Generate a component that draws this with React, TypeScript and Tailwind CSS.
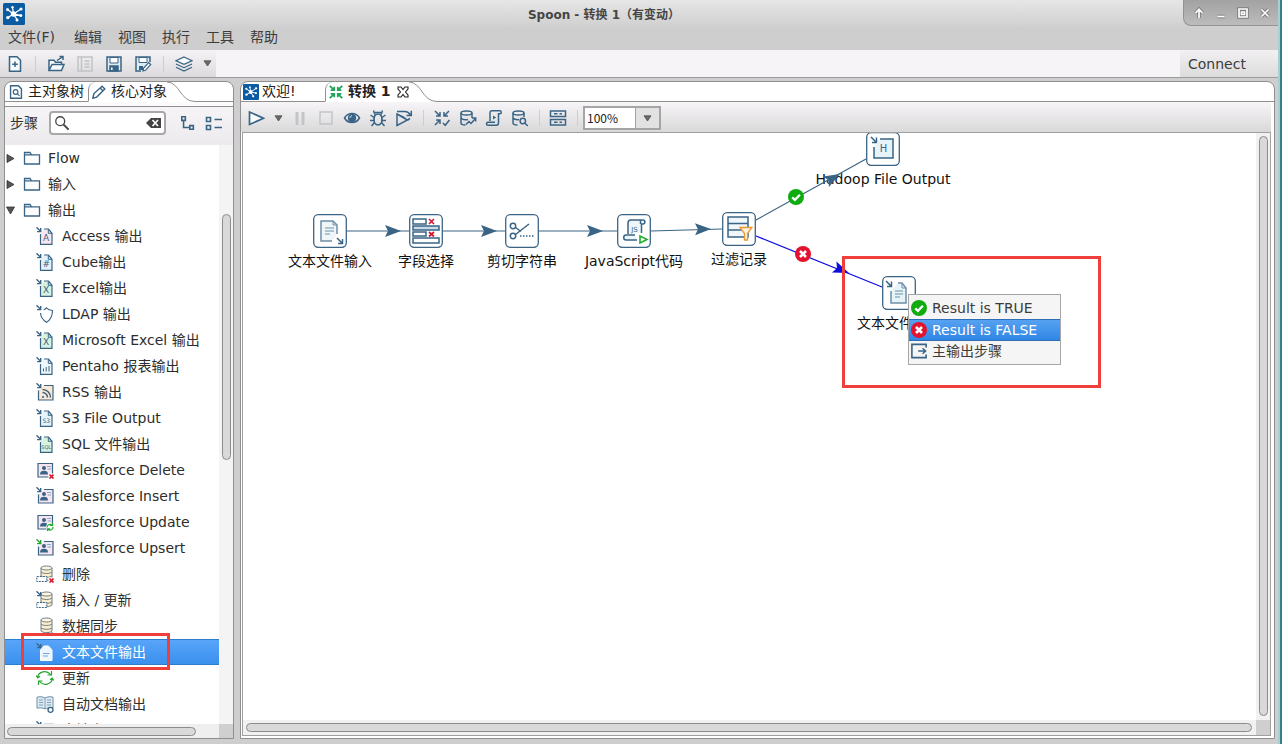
import { useState, type ReactNode } from 'react';
import { clsx } from 'clsx';

const INK = '#3a6485';

interface SvgProps {
  size?: number;
  children: ReactNode;
}

function Svg({ size = 18, children }: SvgProps) {
  return (
    <svg
      width={size}
      height={size}
      viewBox="0 0 18 18"
      fill="none"
      stroke={INK}
      strokeWidth="1.5"
      className="shrink-0"
      aria-hidden="true"
    >
      {children}
    </svg>
  );
}

function Logo({ size }: { size: number }) {
  return (
    <svg width={size} height={size} viewBox="0 0 22 22" className="shrink-0" aria-hidden="true">
      <rect width="22" height="22" rx="1.5" fill="#0a5ba2" />
      <g stroke="#fff" strokeWidth="1.3">
        <path d="M10.5 11 4.5 6.5M10.5 11 9.5 4.5M10.5 11l7.5-5M10.5 11l7 1.5M10.5 11l3.500 5.500M10.500 11 5 14.500" />
      </g>
      <g fill="#fff">
        <circle cx="10.5" cy="11" r="2.7" />
        <circle cx="4.500" cy="6.500" r="1.500" />
        <circle cx="9.500" cy="4.300" r="1.200" />
        <circle cx="18" cy="6" r="1.600" />
        <circle cx="17.800" cy="12.500" r="1.500" />
        <circle cx="14" cy="17" r="1.500" />
        <circle cx="4.800" cy="14.600" r="1.700" />
      </g>
    </svg>
  );
}

function Caret() {
  return (
    <svg width="9" height="7" viewBox="0 0 9 7" aria-hidden="true">
      <path d="M1 .8h7L4.500 6z" fill="#6a6a6a" stroke="#505050" strokeWidth=".8" />
    </svg>
  );
}

/* toolbar icons */

const NewIcon = () => (
  <Svg>
    <path d="M3.500 1.800h7.500l3.500 3.500v11H3.500z" fill="#f6fafc" />
    <path d="M9 6.500v5.500M6.200 9.200h5.600" />
  </Svg>
);

const OpenIcon = () => (
  <Svg>
    <path d="M2 15.500V5.300h5l1.500 2h6v2M2 15.500l3-6h12l-2.500 6z" fill="#f6fafc" />
    <path d="M10 5.500 16 1.500M12.500 1.500H16V5" />
  </Svg>
);

const ExploreIcon = () => (
  <Svg>
    <g stroke="#c2c2c6">
      <path d="M2 2h14v14H2zM5.500 2v14M8.500 6h5M8.500 9h5M8.500 12h5" />
    </g>
  </Svg>
);

const SaveIcon = () => (
  <Svg>
    <path d="M2 2h14v14H2z" fill="#dfeaf1" />
    <path d="M5 2.500h8V8H5z" fill="#fff" strokeWidth="1" />
    <path d="M5 11h8v5H5z" fill={INK} />
    <path d="M6.800 12.500v2.500" stroke="#fff" />
  </Svg>
);

const SaveAsIcon = () => (
  <Svg>
    <path d="M16 7V2H2v14h5" fill="#dfeaf1" />
    <path d="M5 2.500h8V7.500H5z" fill="#fff" strokeWidth="1" />
    <path d="M5 11h4v4H5z" fill={INK} stroke="none" />
    <path d="m9 16 .7-3 5-5.500 2 2-5.200 5.800z" fill="#fff" strokeWidth="1.200" />
  </Svg>
);

const LayersIcon = () => (
  <Svg>
    <path d="m9 2 8 3.700-8 3.700-8-3.700z" fill="#f6fafc" strokeWidth="1.200" />
    <path d="m1 9 8 3.700L17 9M1 12.200 9 16l8-3.800" strokeWidth="1.200" />
  </Svg>
);

const PlayIcon = () => (
  <Svg>
    <path d="M2.500 3v12.500l14-6.250z" fill="#f6fafc" strokeWidth="1.700" />
  </Svg>
);

const PauseIcon = () => (
  <Svg>
    <path d="M6 3v13M12 3v13" stroke="#c4c4c8" strokeWidth="3" />
  </Svg>
);

const StopIcon = () => (
  <Svg>
    <path d="M3 3h12v12H3z" stroke="#c4c4c8" />
  </Svg>
);

const EyeIcon = () => (
  <Svg>
    <path d="M1.500 9C5 3 13 3 16.500 9 13 15 5 15 1.500 9z" />
    <circle cx="9" cy="9" r="4.200" fill={INK} stroke="none" />
    <path d="M6.800 9A2.500 2.500 0 0 1 9 6.700" stroke="#cfe0ec" strokeWidth="1" />
  </Svg>
);

const BugIcon = () => (
  <Svg>
    <path d="M9 5c-3 0-4 2.500-4 5.500S6.500 16 9 16s4-2.500 4-5.500S12 5 9 5z" strokeWidth="1.700" />
    <path d="M5.800 5.500 4.500 1.500M12.200 5.500l1.300-4M6 3.500h6M5 8.500 1.500 6M5 11.500H1M5.500 13.500 2.500 17M13 8.500 16.500 6M13 11.500h4M12.500 13.500l3 3.500" />
  </Svg>
);

const ReplayIcon = () => (
  <Svg>
    <path d="M2 5v11.500L12.500 11zM2 5l8 4" />
    <path d="M2 2.500h8c2.500 0 4 1 5.500 3.500M11.500 6.500h4.800V1.800M12.500 11 15 9.500" />
  </Svg>
);

const arrowsIn = 'M2 2l5 5M3 7h4V3M16 2l-5 5M15 7h-4V3M2 16l5-5M3 11h4v4';

const VerifyIcon = () => (
  <Svg>
    <path d={arrowsIn} />
    <path d="m10 14 2.200 2.300L16.500 11" />
  </Svg>
);

const ImpactIcon = () => (
  <Svg>
    <ellipse cx="7.500" cy="4" rx="5.500" ry="2" />
    <path d="M2 4v10c0 1.200 2 2 4.500 2M13 4v5M2 9c1.500 1.800 5 2 7 1.500" />
    <path d="m7 15.500 3-3 2 2 4.500-5M13 9h3.700v3.500" />
  </Svg>
);

const SqlIcon = () => (
  <Svg>
    <path d="M5 12V4c0-1.500.8-2.200 2-2.200h8c1.500 0 1.800 2.700 0 3H13.500V14c0 1.500-1 2.200-2.200 2.200H3c-2 0-2-3 0-3h7" />
    <path d="M8 6.500v4l3.200-2z" fill={INK} stroke="none" />
  </Svg>
);

const ExploreDbIcon = () => (
  <Svg>
    <ellipse cx="7.500" cy="4" rx="5.500" ry="2" />
    <path d="M2 4v10c0 1.200 2 2 4.500 2M13 4v4M2 9c1.500 1.500 4 1.800 6 1.500" />
    <circle cx="11.800" cy="12" r="2.700" />
    <path d="m13.800 14 3 3" />
  </Svg>
);

const ResultsIcon = () => (
  <Svg>
    <path d="M1.500 2h15v5.500h-15zM1.500 10.500h15V16h-15zM5 4.700h3.500M10.500 4.700H13M5 13.200h3.500M10.500 13.200H13" />
  </Svg>
);

/* step icons for the tree */

const InArrow = ({ color = INK }: { color?: string }) => (
  <path d="M.5.300 4.300 4.100M4.700 1v3.600H1.100" stroke={color} strokeWidth="1.400" />
);

function DocIcon({ fill, label, size = 5 }: { fill: string; label?: string; size?: number }) {
  return (
    <Svg>
      <InArrow />
      <path d="M4.500 7v10.300h11.500V6.300L12.500 2H8" fill={fill} stroke="none" />
      <path d="M4.500 7v10.300h11.500V6.300L12.500 2H8" strokeWidth="1.200" />
      <path d="M12.300 2.500V6.300H16" strokeWidth="1" />
      {label ? (
        <text x="10.200" y="14" fontSize={size} textAnchor="middle" fill={INK} stroke="none">
          {label}
        </text>
      ) : (
        <path d="M7.500 14.500v-3M10.200 14.500V10M13 14.500V9" strokeWidth="1" />
      )}
    </Svg>
  );
}

const ShieldIcon = () => (
  <Svg>
    <InArrow />
    <path
      d="M4.500 8c.2 4 2.500 7 6 9.300 3.800-2.300 6-5.300 6-11.800-2.500-.3-4.500-1.200-6-2.700-.7.800-1.700 1.500-2.800 2"
      strokeWidth="1.100"
    />
  </Svg>
);

const RssIcon = () => (
  <Svg>
    <path d="M2.500 7.500v9.500H17V2.500H8" fill="#fbe9d3" strokeWidth="1.200" />
    <InArrow />
    <path d="M6.500 9.500a5 5 0 0 1 5 5M6.500 6.500a8 8 0 0 1 8 8" />
    <circle cx="7" cy="14" r="1.100" fill={INK} stroke="none" />
  </Svg>
);

function ContactIcon({ kind }: { kind: 'delete' | 'insert' | 'update' | 'upsert' }) {
  const arrow = kind === 'insert' || kind === 'upsert';
  return (
    <Svg>
      <path d={arrow ? 'M2.500 7.500V16H17V2.500H8' : 'M2 2.500h14.500V16H2z'} fill="#f5e6f2" strokeWidth="1.200" />
      <circle cx="8" cy="7" r="2" fill={INK} stroke="none" />
      <path d="M4 13.500c0-3 1.500-3.800 4-3.800s4 .8 4 3.800z" fill={INK} stroke="none" />
      <path d="M11 5.500h4M11.500 8H15" strokeWidth="1" stroke="#8ca6ba" />
      {arrow && <InArrow color={kind === 'upsert' ? '#22a52d' : INK} />}
      {kind === 'delete' && <RedCross />}
      {kind === 'update' && (
        <g stroke="#1fae2c">
          <circle cx="14" cy="14.300" r="4" fill="#fff" stroke="none" />
          <path
            d="M11 14.500a3 3 0 0 1 5-2.300M17 13.800a3 3 0 0 1-5 2.500M16.500 10v2.500H14M11.500 18v-2.200H14"
            strokeWidth="1.200"
          />
        </g>
      )}
    </Svg>
  );
}

const RedCross = () => (
  <>
    <path d="M12.500 12.500H18V18h-5.500z" fill="#fff" stroke="none" />
    <path d="m13.500 13.500 4 4M17.500 13.500l-4 4" stroke="#d9142b" strokeWidth="1.600" />
  </>
);

function DatabaseIcon({ kind }: { kind: 'delete' | 'insert' | 'sync' }) {
  return (
    <Svg>
      <g strokeWidth="1" stroke="#6d7f84">
        <path d="M5 3v11c2 2.200 9 2.200 11 0V3" fill="#fbedcf" />
        <ellipse cx="10.500" cy="3" rx="5.500" ry="2" fill="#fdf5e2" />
        <path d="M5 7c2 2 9 2 11 0M5 10.800c2 2 9 2 11 0" />
      </g>
      {kind !== 'sync' && (
        <path d="M.8 11.500h10v5H.8z" fill="#fff" strokeWidth="1" strokeDasharray="2 1" />
      )}
      {kind === 'delete' && <RedCross />}
      {kind === 'insert' && <InArrow />}
      {kind === 'sync' && (
        <path d="M11 16.500h6M12.500 15 11 16.500l1.500 1.500M15.500 15l1.500 1.500-1.500 1.500" strokeWidth="1" />
      )}
    </Svg>
  );
}

const TextFileIcon = () => (
  <Svg>
    <path d="M4.500 7v10.500H16V7l-3.500-4H8z" fill="#eef6fd" stroke="#fff" strokeWidth="1" />
    <InArrow />
    <path d="M7 10.500h6.500M7 13h5" strokeWidth="1" stroke="#6fa8e4" />
  </Svg>
);

const UpdateIcon = () => (
  <Svg>
    <path
      d="M1.500 8.500C2.500 2.500 10.500.5 14.500 5.500M16.500 9.500c-1 6-9 8-13 3M15.500 2v4h-4M2.500 16v-4h4M.3 6.500l1.500 2.300 2.200-1.500M17.700 11.500l-1.500-2.300L14 10.700"
      stroke="#22a52d"
      strokeWidth="1.200"
    />
  </Svg>
);

const BookIcon = () => (
  <Svg>
    <path
      d="M9 3C6.500 1.500 3.500 1.500 1 2.200v11c2.500-.7 5.500-.5 8 .8 2-1.200 5-1.500 8-.8v-11C14.500 1.500 11.500 1.500 9 3z"
      fill="#dcebf3"
      stroke="#6f8ea6"
      strokeWidth="1"
    />
    <path d="M9 3v11M3 5h4M3 7.500h4M3 10h4M11 5h4M11 7.500h4M11 10h4" stroke="#6f8ea6" strokeWidth=".8" />
    <circle cx="14.500" cy="14.800" r="2.500" fill="#fff" strokeWidth="1.300" />
  </Svg>
);

const TableIcon = () => (
  <Svg>
    <InArrow />
    <path d="M8 3.500h9V16H3V8" fill="#eaf3f8" />
  </Svg>
);

const FolderIcon = () => (
  <Svg>
    <path d="M1.500 15V3.500h5.500l1.500 2.300h8V15zM1.500 5.800H8.500" fill="#fbfdfe" strokeWidth="1.300" />
  </Svg>
);

interface Step {
  label: string;
  icon: ReactNode;
}

const STEPS: Step[] = [
  { label: 'Access 输出', icon: <DocIcon fill="#fae6ee" label="A" size={9} /> },
  { label: 'Cube输出', icon: <DocIcon fill="#e3f2fb" label="#" size={9} /> },
  { label: 'Excel输出', icon: <DocIcon fill="#d8f2df" label="X" size={9} /> },
  { label: 'LDAP 输出', icon: <ShieldIcon /> },
  { label: 'Microsoft Excel 输出', icon: <DocIcon fill="#d8f2df" label="X" size={9} /> },
  { label: 'Pentaho 报表输出', icon: <DocIcon fill="#eef7fc" /> },
  { label: 'RSS 输出', icon: <RssIcon /> },
  { label: 'S3 File Output', icon: <DocIcon fill="#e6f4fc" label="S3" size={6} /> },
  { label: 'SQL 文件输出', icon: <DocIcon fill="#d8f2df" label="SQL" size={5} /> },
  { label: 'Salesforce Delete', icon: <ContactIcon kind="delete" /> },
  { label: 'Salesforce Insert', icon: <ContactIcon kind="insert" /> },
  { label: 'Salesforce Update', icon: <ContactIcon kind="update" /> },
  { label: 'Salesforce Upsert', icon: <ContactIcon kind="upsert" /> },
  { label: '删除', icon: <DatabaseIcon kind="delete" /> },
  { label: '插入 / 更新', icon: <DatabaseIcon kind="insert" /> },
  { label: '数据同步', icon: <DatabaseIcon kind="sync" /> },
  { label: '文本文件输出', icon: <TextFileIcon /> },
  { label: '更新', icon: <UpdateIcon /> },
  { label: '自动文档输出', icon: <BookIcon /> },
  { label: '表输出', icon: <TableIcon /> },
];

const FOLDERS = [
  { label: 'Flow', open: false },
  { label: '输入', open: false },
  { label: '输出', open: true },
];

/* shared bits */

function ToolButton({ label, wide, children }: { label: string; wide?: boolean; children: ReactNode }) {
  return (
    <button
      type="button"
      aria-label={label}
      className={clsx('flex h-6 shrink-0 items-center justify-center', wide ? 'w-[29px]' : 'w-[26px]')}
    >
      {children}
    </button>
  );
}

function DropButton({ label }: { label: string }) {
  return (
    <button type="button" aria-label={label} className="flex h-6 w-[18px] shrink-0 items-center justify-center">
      <Caret />
    </button>
  );
}

function Separator() {
  return (
    <span className="flex w-3 shrink-0 justify-center">
      <span className="h-4 w-px bg-[#cfcdd0]" />
    </span>
  );
}

function TabCurve() {
  return (
    <svg width="28" height="20" viewBox="0 0 28 20" className="shrink-0" aria-hidden="true">
      <path d="M0 0C13 .5 13 19.500 28 19.500" fill="none" stroke="#8f8f8f" />
    </svg>
  );
}

/* header */

function TitleBar() {
  return (
    <header className="flex h-7 shrink-0 bg-gradient-to-b from-[#e6e6e6] to-[#cfcfcf]">
      <div className="pt-[3px] pl-[3px]">
        <Logo size={22} />
      </div>
      <h1 className="flex-1 pt-px text-center text-[12px] leading-[28px] font-bold text-[#454545]">
        Spoon - 转换 1（有变动）
      </h1>
      <div className="flex h-[26px] items-center rounded-bl-lg border-b border-l border-[#929292] bg-gradient-to-b from-[#a2a2a2] to-[#bcbcbc] pt-px pr-[2px] pl-1">
        <WindowButton label="置顶" d="M8 13V5M4.500 8 8 4.300 11.500 8" />
        <WindowButton label="最小化" d="M4.500 11.500h7" />
        <WindowButton label="最大化" d="M4 4h8v8H4zM6.500 7h3v2.500h-3z" />
        <WindowButton label="关闭" d="m4.500 4.500 7 7M11.500 4.500l-7 7" />
      </div>
    </header>
  );
}

function WindowButton({ label, d }: { label: string; d: string }) {
  return (
    <button type="button" aria-label={label} className="flex w-[22px] justify-center">
      <svg width="16" height="16" viewBox="0 0 16 16" fill="none" aria-hidden="true">
        <path d={d} stroke="#7c7c7c" strokeWidth="3.600" />
        <path d={d} stroke="#fff" strokeWidth="1.700" />
      </svg>
    </button>
  );
}

function MenuBar() {
  return (
    <nav className="flex h-[22px] shrink-0 bg-[#cecece] text-[14px] leading-[18px] text-[#3c3c3c]">
      <button type="button" className="flex min-w-[66px] px-2">
        文件(F)
      </button>
      {['编辑', '视图', '执行', '工具', '帮助'].map((item) => (
        <button key={item} type="button" className="flex px-2">
          {item}
        </button>
      ))}
    </nav>
  );
}

function MainToolbar() {
  return (
    <div className="flex h-7 shrink-0 border-b border-[#9b9b9b] bg-[#f6f4f6]">
      <div className="flex items-center bg-gradient-to-b from-[#f5f3f5] to-[#dcdadc]">
        <ToolButton wide label="新建"><NewIcon /></ToolButton>
        <Separator />
        <ToolButton wide label="打开"><OpenIcon /></ToolButton>
        <ToolButton wide label="浏览资源库"><ExploreIcon /></ToolButton>
        <ToolButton wide label="保存"><SaveIcon /></ToolButton>
        <ToolButton wide label="另存为"><SaveAsIcon /></ToolButton>
        <Separator />
        <ToolButton wide label="透视图"><LayersIcon /></ToolButton>
        <DropButton label="选择透视图" />
      </div>
      <button
        type="button"
        className="ml-auto w-[98px] bg-gradient-to-b from-[#f2f0f2] to-[#dcdcdc] pt-px pl-2 text-left text-[14px] leading-[26px] text-[#3c3c3c]"
      >
        Connect
      </button>
    </div>
  );
}

/* left panel */

function Sidebar() {
  const [query, setQuery] = useState('');
  const [selected, setSelected] = useState('文本文件输出');

  return (
    <aside className="flex w-[230px] shrink-0 flex-col overflow-hidden rounded-t-lg border border-[#8f8f8f] bg-white">
      <div className="flex h-5 shrink-0 text-[14px] leading-[19px] text-[#222]">
        <button type="button" className="flex items-center gap-[5px] border-b border-[#8f8f8f] px-1">
          <Svg size={14}>
            <path d="M2 1h10l4 4v12H2z" strokeWidth="1.800" />
            <circle cx="8.500" cy="9" r="3" />
            <path d="m10.500 11 3 3" />
          </Svg>
          主对象树
        </button>
        <button
          type="button"
          className="flex items-center gap-[5px] rounded-tl-lg border-b border-l border-b-transparent border-l-[#8f8f8f] pl-[3px]"
        >
          <Svg size={14}>
            <path d="M1 17l1.500-6L13 1.500 16.500 5 6 15.500zM10.500 4 14 7.500" strokeWidth="1.800" />
          </Svg>
          核心对象
        </button>
        <TabCurve />
        <span className="flex-1 border-b border-[#8f8f8f]" />
      </div>
      <div className="h-1 shrink-0 bg-[#fbfbfb]" />

      <div className="flex h-[39px] shrink-0 items-center border-t border-[#8f8f8f] bg-gradient-to-b from-[#f6f4f6] to-[#eceaec] pb-[6px] pl-[5px]">
        <label htmlFor="step-search" className="w-[39px] text-[14px] text-[#333]">
          步骤
        </label>
        <div className="flex h-6 w-[117px] items-center rounded-sm border-2 border-[#a8a8a8] bg-white px-[3px]">
          <Svg size={16}>
            <circle cx="7" cy="7" r="5" stroke="#444" />
            <path d="m10.500 10.500 6 6" stroke="#444" strokeWidth="2.200" />
          </Svg>
          <input
            id="step-search"
            value={query}
            onChange={(e) => setQuery(e.target.value)}
            className="min-w-0 flex-1 bg-transparent text-[14px] outline-none"
          />
          <button type="button" aria-label="清除" onClick={() => setQuery('')}>
            <svg width="15" height="10" viewBox="0 0 15 10" aria-hidden="true">
              <path d="M5 0h10v10H5L0 5z" fill="#444" />
              <path d="m6.500 2 5.500 6M12 2 6.500 8" stroke="#fff" strokeWidth="1.700" />
            </svg>
          </button>
        </div>
        <div className="ml-[9px] flex">
          <ToolButton label="展开全部">
            <Svg size={16}>
              <path d="M2 2h4v4H2zM11 12h4v4h-4zM4 6v8h7" strokeWidth="1.800" />
            </Svg>
          </ToolButton>
          <ToolButton label="折叠全部">
            <Svg>
              <path d="M1.500 3.500h4v4h-4zM1.500 11.500h4v4h-4zM9.500 5.500H17M9.500 13.500H17" strokeWidth="1.600" />
            </Svg>
          </ToolButton>
        </div>
      </div>

      <div className="flex min-h-0 flex-1">
        <ul className="min-w-0 flex-1 overflow-hidden text-[14px] leading-[26px] text-[#2d2d2d]">
          {FOLDERS.map((folder) => (
            <li key={folder.label}>
              <button type="button" aria-expanded={folder.open} className="flex h-[26px] w-full items-center">
                <svg width="9" height="9" viewBox="0 0 9 9" className="mr-2 ml-px" aria-hidden="true">
                  <path
                    d={folder.open ? 'M.5 1h8L4.500 8z' : 'M1 .5v8l7-4z'}
                    fill="#555"
                    stroke="#333"
                    strokeWidth=".8"
                  />
                </svg>
                <FolderIcon />
                <span className="ml-[7px]">{folder.label}</span>
              </button>
            </li>
          ))}
          {STEPS.map(({ label, icon }) => (
            <li key={label} className="relative">
              <button
                type="button"
                onClick={() => setSelected(label)}
                className={clsx(
                  'flex h-[26px] w-full items-center gap-2 pl-[31px] whitespace-nowrap',
                  selected === label &&
                    'border-y border-[#2c7cd0] bg-gradient-to-b from-[#58a5fa] to-[#3990ee] text-white',
                )}
              >
                {icon}
                {label}
              </button>
              {label === '文本文件输出' && (
                <span className="pointer-events-none absolute -top-[6px] left-4 z-10 h-[37px] w-[149px] border-3 border-[#ee3f3b]" />
              )}
            </li>
          ))}
        </ul>
        <div className="w-[14px] shrink-0 bg-[#f5f4f5] pt-[69px] pl-[3px]">
          <div className="h-[246px] w-[9px] rounded-full border border-[#8c8c8c] bg-[#d9d9d9]" />
        </div>
      </div>
      <div className="flex h-[14px] shrink-0 items-center bg-[#efefef]">
        <div className="ml-[2px] h-[9px] w-[189px] rounded-full border border-[#8c8c8c] bg-[#d9d9d9]" />
        <div className="ml-auto h-full w-[14px] bg-[#cfcfcf]" />
      </div>
    </aside>
  );
}

/* canvas */

interface FlowNode {
  label: string;
  x: number;
  y: number;
  icon: ReactNode;
}

const NODES: FlowNode[] = [
  {
    label: '文本文件输入',
    x: 70,
    y: 81,
    icon: (
      <>
        <path d="M24 20v-9l-4-4H8v20h11" fill="#eef6fa" stroke="#6f8ea6" />
        <path d="M20 7v4h4M12 14h9M12 17h9M12 20h5" stroke="#6f8ea6" strokeWidth="1" />
        <path d="m24 24 5 5M29.500 25v4.500H25" />
      </>
    ),
  },
  {
    label: '字段选择',
    x: 166,
    y: 81,
    icon: (
      <>
        <path d="M4 5h13v5H4zM4 18h13v4H4z" fill="#fff" />
        <path d="M4 12h26v4H4z" fill="#c9dbe8" />
        <path d="M4 24h26v5H4z" fill="#fff" />
        <path d="m20 5 5 5M25 5l-5 5M20 18l5 4.500M25 18l-5 4.500" stroke="#d81830" strokeWidth="1.700" />
      </>
    ),
  },
  {
    label: '剪切字符串',
    x: 262,
    y: 81,
    icon: (
      <>
        <circle cx="8" cy="12" r="2.700" />
        <circle cx="8" cy="22" r="2.700" />
        <path d="m10.500 13.500 5.500 4M10.500 20.500 24 10" />
        <path d="M15 22h15" strokeDasharray="1.500 1.500" />
      </>
    ),
  },
  {
    label: 'JavaScript代码',
    x: 374,
    y: 81,
    icon: (
      <>
        <path d="M11 20V9c0-2 1-3 3-3h12c2.500 0 2.500 4 0 4h-1.500v9M14 6h9.500v4" fill="#eef6fa" />
        <path d="M20 26H9c-3 0-3-5 0-5h9" fill="#eef6fa" />
        <text x="17.500" y="18" fontSize="7" textAnchor="middle" fill={INK} stroke="none">
          JS
        </text>
        <path d="M23 22v7l7-3.500z" fill="#fff" stroke="#1fae2c" strokeWidth="1.600" />
      </>
    ),
  },
  {
    label: '过滤记录',
    x: 479,
    y: 79,
    icon: (
      <>
        <path d="M6 5h20v20H6z" fill="#eef6fa" />
        <path d="M6 11.500h20M6 18h14" />
        <path d="M18 15.500h12l-4.500 6V28h-3v-6.500z" fill="#fff3e2" stroke="#f0982e" strokeWidth="1.300" />
      </>
    ),
  },
  {
    label: 'Hadoop File Output',
    x: 623,
    y: -1,
    icon: (
      <>
        <path d="M5 5l5 5M10.500 5.500v5H6" />
        <path d="M14 7h13v19H8V15" fill="#e6f4fa" />
        <text x="17.500" y="20" fontSize="10" textAnchor="middle" fill={INK} stroke="none">
          H
        </text>
      </>
    ),
  },
  {
    label: '文本文件输出',
    x: 639,
    y: 143,
    icon: (
      <>
        <path d="M4 5l5 5M9.500 5.500v5H5" />
        <path d="M9 15v12h15V12l-4-5h-4" fill="#e6f4fa" stroke="#6f8ea6" />
        <path d="M20 7v5h4M13 15h8M13 18h8M13 21h5" stroke="#6f8ea6" strokeWidth="1" />
      </>
    ),
  },
];

const LINKS = [
  { x1: 104, y1: 98, x2: 166, y2: 98, ax: 158, ay: 98, angle: 0, color: INK },
  { x1: 200, y1: 98, x2: 262, y2: 98, ax: 254, ay: 98, angle: 0, color: INK },
  { x1: 296, y1: 98, x2: 374, y2: 98, ax: 360, ay: 98, angle: 0, color: INK },
  { x1: 408, y1: 98, x2: 479, y2: 96, ax: 468, ay: 96, angle: -1, color: INK },
  { x1: 513, y1: 87, x2: 623, y2: 26, ax: 597, ay: 41, angle: -29, color: INK },
  { x1: 513, y1: 103, x2: 639, y2: 154, ax: 606, ay: 140, angle: 22, color: '#0d0de0' },
];

function ResultBadge({ ok }: { ok: boolean }) {
  return (
    <svg width="16" height="16" viewBox="0 0 16 16" fill="none" className="shrink-0" aria-hidden="true">
      <circle cx="8" cy="8" r="8" fill={ok ? '#10ab10' : '#e3132f'} />
      {ok ? (
        <path d="m4.200 8.300 2.700 2.500 5-5" stroke="#fff" strokeWidth="2.300" />
      ) : (
        <path d="m5 5 6 6M11 5l-6 6" stroke="#fff" strokeWidth="2.600" />
      )}
    </svg>
  );
}

function ResultMenu() {
  return (
    <div
      role="menu"
      className="absolute top-[161px] left-[665px] w-[153px] border border-[#a6a6a6] bg-[#f5f5f5] pt-[2px] pb-px text-[14px] leading-5 text-[#3c3c3c]"
    >
      <button type="button" role="menuitem" className="flex h-[22px] w-full items-center gap-[5px] px-[2px]">
        <ResultBadge ok />
        Result is TRUE
      </button>
      <button
        type="button"
        role="menuitem"
        className="flex h-[22px] w-full items-center gap-[5px] border-y border-[#2c6fb8] bg-gradient-to-b from-[#56a2f2] to-[#2f86e4] px-[2px] text-white"
      >
        <ResultBadge ok={false} />
        Result is FALSE
      </button>
      <button type="button" role="menuitem" className="flex h-[22px] w-full items-center gap-[5px] px-[2px] pb-[2px]">
        <Svg size={16}>
          <path d="M17 5V1.500H1v15h16V13" strokeWidth="1.800" />
          <path d="M8 9h8M13 5.800 16.500 9 13 12.200" strokeWidth="1.600" />
        </Svg>
        主输出步骤
      </button>
    </div>
  );
}

function Canvas() {
  return (
    <div className="relative min-w-0 flex-1 overflow-hidden bg-white">
      {NODES.map((node) => (
        <div
          key={node.label}
          className="absolute flex w-[34px] flex-col items-center"
          style={{ left: node.x, top: node.y }}
        >
          <svg
            width="34"
            height="34"
            viewBox="0 0 34 34"
            fill="none"
            stroke={INK}
            strokeWidth="1.500"
            className="shrink-0"
            aria-hidden="true"
          >
            <rect x=".7" y=".7" width="32.600" height="32.600" rx="4.500" fill="#fff" strokeWidth="1.300" />
            {node.icon}
          </svg>
          <span className="mt-1 text-[14px] leading-[18px] whitespace-nowrap text-[#111]">{node.label}</span>
        </div>
      ))}
      <svg className="pointer-events-none absolute inset-0 h-full w-full" aria-hidden="true">
        {LINKS.map((link) => (
          <g key={`${link.x1}-${link.y1}`}>
            <line x1={link.x1} y1={link.y1} x2={link.x2} y2={link.y2} stroke={link.color} strokeWidth="1.200" />
            <path
              d="M0 0-16-6-13 0-16 6z"
              fill={link.color}
              transform={`translate(${link.ax} ${link.ay}) rotate(${link.angle})`}
            />
          </g>
        ))}
      </svg>
      <div className="absolute top-14 left-[545px]">
        <ResultBadge ok />
      </div>
      <div className="absolute top-[113px] left-[552px]">
        <ResultBadge ok={false} />
      </div>
      <ResultMenu />
      <div className="pointer-events-none absolute top-[123px] left-[599px] h-[132px] w-[259px] border-3 border-[#ee3f3b]" />
    </div>
  );
}

function Editor() {
  return (
    <main className="flex min-w-0 flex-1 flex-col overflow-hidden rounded-t-lg border border-[#8f8f8f] bg-white">
      <div className="flex h-5 shrink-0 text-[14px] leading-[19px] text-[#222]">
        <button type="button" className="flex w-[84px] items-center gap-[3px] border-b border-[#8f8f8f] pl-[2px]">
          <Logo size={16} />
          欢迎!
        </button>
        <div className="flex items-center rounded-tl-lg border-b border-l border-b-transparent border-l-[#8f8f8f] pl-[2px]">
          <button type="button" className="flex items-center gap-1 font-bold">
            <svg width="16" height="16" viewBox="0 0 18 18" fill="none" aria-hidden="true">
              <path d={`${arrowsIn}M16 16l-5-5M15 11h-4v4`} stroke="#22a55a" strokeWidth="2" />
            </svg>
            转换 1
          </button>
          <button type="button" aria-label="关闭标签" className="ml-[6px]">
            <svg width="12" height="12" viewBox="0 0 12 12" fill="none" aria-hidden="true">
              <path
                d="M1 1h3l2 2.500L8 1h3v2L8.500 6 11 9v2H8L6 8.500 4 11H1V9l2.500-3L1 3z"
                stroke="#222"
                strokeWidth="1.100"
              />
            </svg>
          </button>
        </div>
        <TabCurve />
        <span className="flex-1 border-b border-[#8f8f8f]" />
      </div>

      <div className="mr-[3px] flex h-[30px] shrink-0 items-center bg-gradient-to-b from-[#f7f5f7] to-[#dad9da] pt-[2px] pl-[2px]">
        <ToolButton label="运行"><PlayIcon /></ToolButton>
        <DropButton label="运行选项" />
        <ToolButton label="暂停"><PauseIcon /></ToolButton>
        <ToolButton label="停止"><StopIcon /></ToolButton>
        <ToolButton label="预览"><EyeIcon /></ToolButton>
        <ToolButton label="调试"><BugIcon /></ToolButton>
        <ToolButton label="重放"><ReplayIcon /></ToolButton>
        <Separator />
        <ToolButton label="校验"><VerifyIcon /></ToolButton>
        <ToolButton label="影响分析"><ImpactIcon /></ToolButton>
        <ToolButton label="产生 SQL"><SqlIcon /></ToolButton>
        <ToolButton label="探测数据库"><ExploreDbIcon /></ToolButton>
        <Separator />
        <ToolButton label="执行结果"><ResultsIcon /></ToolButton>
        <Separator />
        <div className="relative h-6 w-[78px] border-2 border-[#a5a5a5] bg-white">
          <select
            aria-label="缩放"
            defaultValue="100%"
            className="block h-full w-full appearance-none bg-transparent pl-[2px] font-['Noto_Sans_CJK_SC',sans-serif] text-[12px] leading-5 text-[#222] outline-none"
          >
            <option>200%</option>
            <option>100%</option>
            <option>50%</option>
          </select>
          <span className="pointer-events-none absolute inset-y-0 right-0 flex w-6 items-center justify-center border-l border-[#a5a5a5] bg-[#e2e2e2]">
            <Caret />
          </span>
        </div>
      </div>

      <div className="mr-[3px] mb-[2px] ml-px flex min-h-0 flex-1 flex-col border border-[#a0a0a0]">
        <div className="flex min-h-0 flex-1">
          <Canvas />
          <div className="flex w-[14px] shrink-0 justify-center bg-[#f1f1f1] pt-[3px] pb-1">
            <div className="w-[9px] rounded-full border border-[#8c8c8c] bg-[#d9d9d9]" />
          </div>
        </div>
        <div className="flex h-[15px] shrink-0 items-center bg-[#f1f1f1]">
          <div className="mr-1 ml-[3px] h-[9px] flex-1 rounded-full border border-[#8c8c8c] bg-[#d9d9d9]" />
          <div className="h-full w-[14px] bg-[#cfcfcf]" />
        </div>
      </div>
    </main>
  );
}

export default function App() {
  return (
    <div className="flex h-screen overflow-hidden bg-[#cecece] font-['DejaVu_Sans','Noto_Sans_CJK_SC',sans-serif]">
      <div className="flex min-w-0 flex-1 flex-col">
        <TitleBar />
        <MenuBar />
        <MainToolbar />
        <div className="flex min-h-0 flex-1 gap-[6px] pt-[3px] pr-[3px] pb-[5px] pl-1">
          <Sidebar />
          <Editor />
        </div>
      </div>
      <div className="w-1 shrink-0 border-r-2 border-[#36808c] bg-[#a9cfd0]" />
    </div>
  );
}
